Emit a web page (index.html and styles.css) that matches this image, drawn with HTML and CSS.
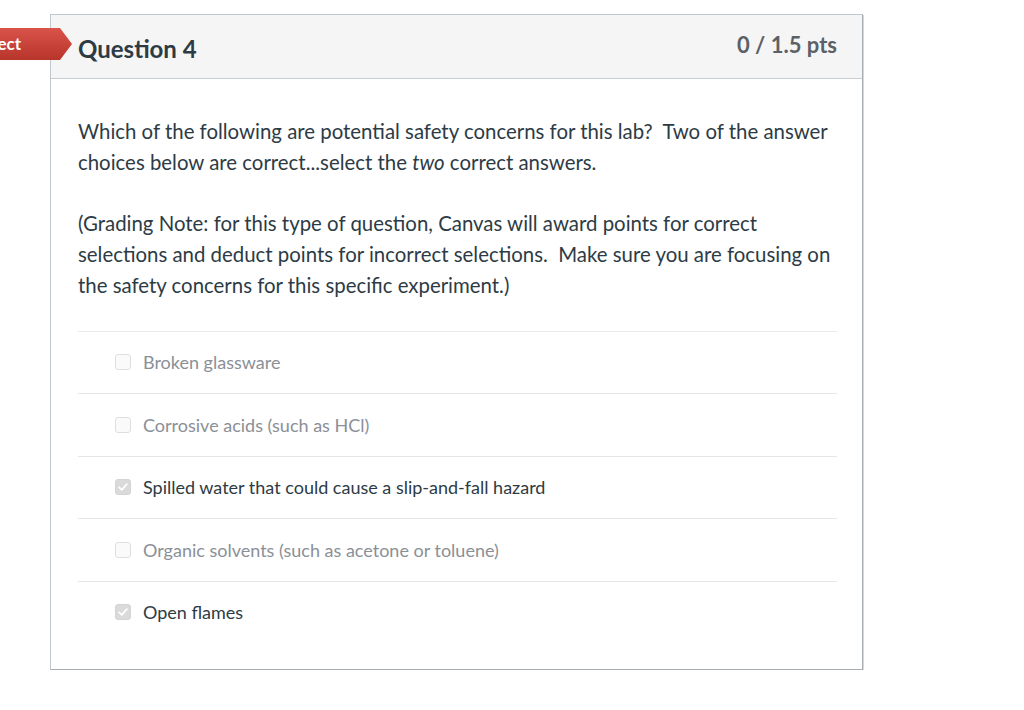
FILE: index.html
```html
<!DOCTYPE html>
<html>
<head>
<meta charset="utf-8">
<link rel="stylesheet" href="styles.css">
</head>
<body>
<div class="page">
  <div class="tag">Incorrect</div>
  <div class="card">
    <div class="card-header">
      <h2 class="title">Question 4</h2>
      <div class="pts">0 / 1.5 pts</div>
    </div>
    <div class="card-body">
      <p class="para">Which of the following are potential safety concerns for this lab?&nbsp; Two of the answer choices below are correct...select the <em>two</em> correct answers.</p>
      <p class="para last">(Grading Note: for this type of question, Canvas will award points for correct selections and deduct points for incorrect selections.&nbsp; Make sure you are focusing on the safety concerns for this specific experiment.)</p>
      <ul class="answers">
        <li class="answer"><span class="box"></span><span class="label muted">Broken glassware</span></li>
        <li class="answer"><span class="box"></span><span class="label muted">Corrosive acids (such as HCl)</span></li>
        <li class="answer"><span class="box checked"><svg viewBox="0 0 16 16" width="16" height="16"><path d="M3.6 8.4 L6.6 11.3 L12.4 4.8" fill="none" stroke="#fff" stroke-width="2" stroke-linecap="round" stroke-linejoin="round"/></svg></span><span class="label">Spilled water that could cause a slip-and-fall hazard</span></li>
        <li class="answer"><span class="box"></span><span class="label muted">Organic solvents (such as acetone or toluene)</span></li>
        <li class="answer last"><span class="box checked"><svg viewBox="0 0 16 16" width="16" height="16"><path d="M3.6 8.4 L6.6 11.3 L12.4 4.8" fill="none" stroke="#fff" stroke-width="2" stroke-linecap="round" stroke-linejoin="round"/></svg></span><span class="label">Open flames</span></li>
      </ul>
    </div>
  </div>
</div>
</body>
</html>
```

FILE: styles.css
```css
html, body {
  margin: 0;
  padding: 0;
  background: #fff;
}
body {
  font-family: Lato, "Open Sans", "Liberation Sans", sans-serif;
  color: #2d3b45;
}
.page {
  position: relative;
  padding: 14px 0 0 50px;
}
.tag {
  position: absolute;
  left: -64px;
  top: 28px;
  width: 136px;
  height: 32px;
  box-sizing: border-box;
  padding-right: 51px;
  text-align: right;
  line-height: 31px;
  font-size: 17px;
  font-weight: 700;
  color: #fff;
  background: linear-gradient(#d9534a, #b8352c);
  clip-path: polygon(0 0, 124px 0, 136px 16px, 124px 32px, 0 32px);
  z-index: 2;
}
.card {
  width: 811px;
  border: 1px solid #c1c7cb;
  border-right-color: #a9aeb2;
  border-bottom-color: #a9aeb2;
  box-shadow: 1px 1px 0 #d4d8db;
  background: #fff;
}
.card-header {
  height: 63px;
  background: #f5f5f5;
  border-bottom: 1px solid #c7cdd1;
  display: flex;
  align-items: center;
  justify-content: space-between;
  padding: 0 25px 0 27px;
}
.title {
  margin: 4px 0 0 0;
  font-size: 24px;
  font-weight: 700;
  color: #2d3b45;
}
.pts {
  font-size: 22px;
  font-weight: 700;
  color: #5b6166;
  margin-top: -4px;
}
.card-body {
  padding: 37px 25px 26px 27px;
}
.para {
  margin: 0 0 31px 0;
  font-size: 20.4px;
  line-height: 30.7px;
}
.para.last {
  margin-bottom: 30px;
}
.para em {
  font-style: italic;
}
.answers {
  list-style: none;
  margin: 0;
  padding: 0;
  border-top: 1px solid #eaeaea;
}
.answer {
  height: 61.5px;
  border-bottom: 1px solid #e6e6e6;
  display: flex;
  align-items: center;
  padding-left: 37px;
  gap: 12px;
  font-size: 18px;
}
.answer.last {
  border-bottom: none;
}
.box {
  width: 14px;
  height: 14px;
  border: 1px solid #dfdfdf;
  border-radius: 3px;
  background: #fafafa;
  display: flex;
  align-items: center;
  justify-content: center;
  flex: none;
}
.box.checked {
  background: #dadada;
  border-color: #d4d4d4;
}
.box svg {
  width: 14px;
  height: 14px;
}
.label {
  color: #2d3b45;
}
.label.muted {
  color: #8a9096;
}
```
